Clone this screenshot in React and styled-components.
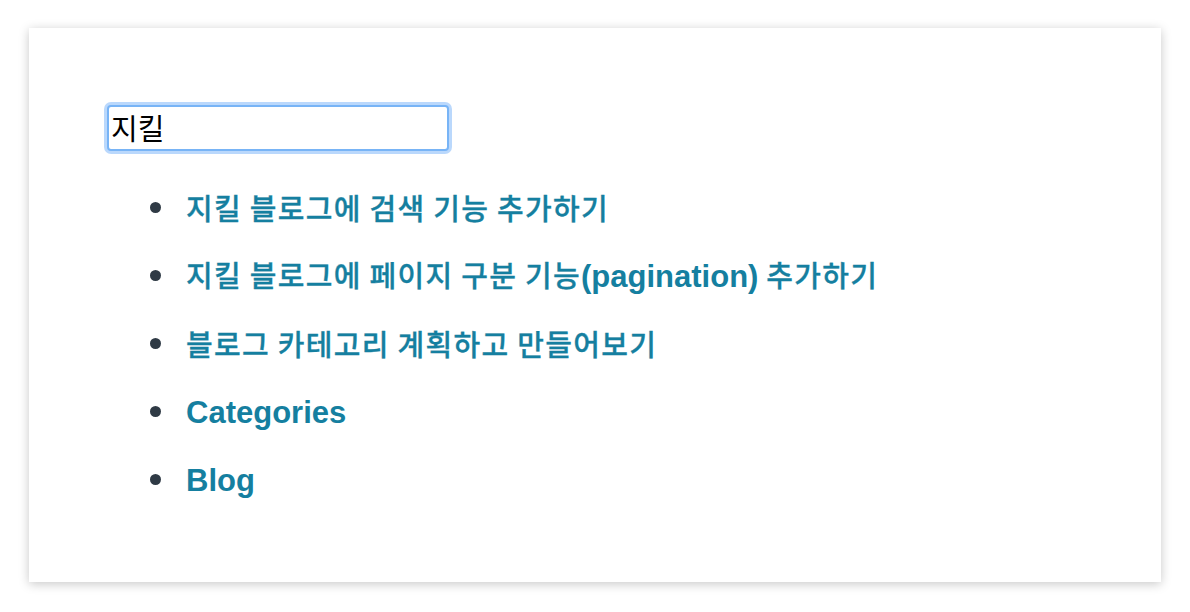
import React from "react";
import styled, { createGlobalStyle } from "styled-components";

const Global = createGlobalStyle`
  html, body { margin: 0; padding: 0; background: #ffffff; }
  body { font-family: "Liberation Sans", "Noto Sans CJK KR", sans-serif; }
`;

const Page = styled.div`
  padding: 28px 29px;
  width: 1190px;
  height: 612px;
  box-sizing: border-box;
`;

const Card = styled.div`
  width: 1132px;
  height: 554px;
  box-sizing: border-box;
  background: #fff;
  box-shadow: 0 2px 10px rgba(0, 0, 0, 0.22);
  padding: 77px 78px;
`;

const SearchInput = styled.input`
  display: block;
  width: 342px;
  height: 46px;
  box-sizing: border-box;
  margin: 0;
  padding: 0 2px 3px;
  border: 2px solid #78b4f6;
  border-radius: 4px;
  box-shadow: 0 0 0 3px rgba(140, 190, 250, 0.6);
  outline: none;
  font-family: "Liberation Sans", "Noto Sans CJK KR", sans-serif;
  font-size: 29px;
  color: #000;
  caret-color: #000;
`;

const List = styled.ul`
  margin: 22px 0 0 0;
  padding: 0 0 0 43px;
  list-style: none;
`;

const Item = styled.li`
  display: flex;
  align-items: center;
  gap: 25px;
  height: 68px;
`;

const Bullet = styled.span`
  flex: none;
  width: 11px;
  height: 11px;
  border-radius: 50%;
  background: #2f3a45;
`;

const Link = styled.a`
  color: #157fa0;
  text-decoration: none;
  line-height: 68px;
  white-space: nowrap;
  font-family: "Noto Sans CJK KR", "Liberation Sans", sans-serif;
  font-weight: 500;
  font-size: 29px;
  letter-spacing: 1.3px;
  -webkit-text-stroke: 0.3px;
`;

const Latin = styled.span`
  font-family: "Liberation Sans", sans-serif;
  font-weight: 700;
  font-size: 31px;
  letter-spacing: 0;
  -webkit-text-stroke: 0;
`;

const items = [
  ["지킬 블로그에 검색 기능 추가하기"],
  ["지킬 블로그에 페이지 구분 기능", { latin: "(pagination)" }, " 추가하기"],
  ["블로그 카테고리 계획하고 만들어보기"],
  [{ latin: "Categories" }],
  [{ latin: "Blog" }],
];

export default function App() {
  return (
    <Page>
      <Global />
      <Card>
        <SearchInput defaultValue="지킬" autoFocus />
        <List>
          {items.map((parts, i) => (
            <Item key={i}>
              <Bullet />
              <Link href="#">
                {parts.map((p, j) =>
                  typeof p === "string" ? p : <Latin key={j}>{p.latin}</Latin>
                )}
              </Link>
            </Item>
          ))}
        </List>
      </Card>
    </Page>
  );
}
